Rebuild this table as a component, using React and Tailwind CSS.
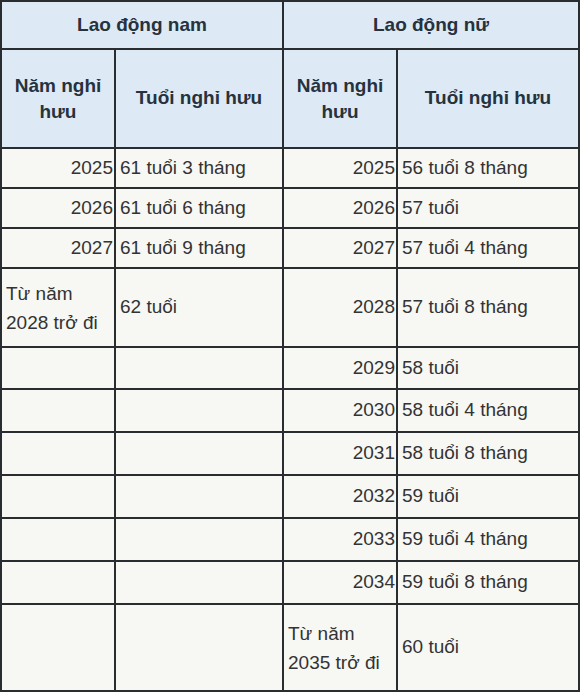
import React from 'react';

const male = [
  ['2025', '61 tuổi 3 tháng'],
  ['2026', '61 tuổi 6 tháng'],
  ['2027', '61 tuổi 9 tháng'],
  ['Từ năm 2028 trở đi', '62 tuổi'],
];

const female = [
  ['2025', '56 tuổi 8 tháng'],
  ['2026', '57 tuổi'],
  ['2027', '57 tuổi 4 tháng'],
  ['2028', '57 tuổi 8 tháng'],
  ['2029', '58 tuổi'],
  ['2030', '58 tuổi 4 tháng'],
  ['2031', '58 tuổi 8 tháng'],
  ['2032', '59 tuổi'],
  ['2033', '59 tuổi 4 tháng'],
  ['2034', '59 tuổi 8 tháng'],
  ['Từ năm 2035 trở đi', '60 tuổi'],
];

const heights = ['h-[40px]', 'h-[40px]', 'h-[40px]', 'h-[79px]', 'h-[42px]', 'h-[43px]', 'h-[43px]', 'h-[43px]', 'h-[43px]', 'h-[43px]', 'h-[87px]'];

const YearCell = ({ v }) => {
  const isLong = v && v.startsWith('Từ');
  return (
    <td className={`border-2 border-[#2a2d30] align-middle ${isLong ? 'text-left pl-[4px] leading-[29px]' : 'text-right pr-[1px]'}`}>
      {isLong ? (
        <>
          Từ năm
          <br />
          {v.replace('Từ năm ', '')}
        </>
      ) : v}
    </td>
  );
};

export default function App() {
  return (
    <div className="w-[580px] h-[692px] bg-white" style={{ fontFamily: '"Liberation Sans", Arial, sans-serif' }}>
      <table className="table-fixed border-collapse w-[578px] text-[19px] text-[#333]">
        <colgroup>
          <col className="w-[114px]" />
          <col className="w-[168px]" />
          <col className="w-[114px]" />
          <col className="w-[182px]" />
        </colgroup>
        <thead>
          <tr className="h-[48px] bg-[#dde9f4]">
            <th colSpan={2} className="border-2 border-[#2a2d30] font-bold text-[#26323e] text-center">Lao động nam</th>
            <th colSpan={2} className="border-2 border-[#2a2d30] font-bold text-[#26323e] text-center">Lao động nữ</th>
          </tr>
          <tr className="h-[99px] bg-[#dde9f4]">
            <th className="border-2 border-[#2a2d30] font-bold text-[#26323e] text-center leading-[26px]">Năm nghỉ<br />hưu</th>
            <th className="border-2 border-[#2a2d30] font-bold text-[#26323e] text-center">Tuổi nghỉ hưu</th>
            <th className="border-2 border-[#2a2d30] font-bold text-[#26323e] text-center leading-[26px]">Năm nghỉ<br />hưu</th>
            <th className="border-2 border-[#2a2d30] font-bold text-[#26323e] text-center">Tuổi nghỉ hưu</th>
          </tr>
        </thead>
        <tbody className="bg-[#f7f8f3]">
          {female.map((f, i) => {
            const m = male[i] || ['', ''];
            return (
              <tr key={i} className={heights[i]}>
                <YearCell v={m[0]} />
                <td className="border-2 border-[#2a2d30] pl-[4px] align-middle">{m[1]}</td>
                <YearCell v={f[0]} />
                <td className="border-2 border-[#2a2d30] pl-[4px] align-middle">{f[1]}</td>
              </tr>
            );
          })}
        </tbody>
      </table>
    </div>
  );
}
